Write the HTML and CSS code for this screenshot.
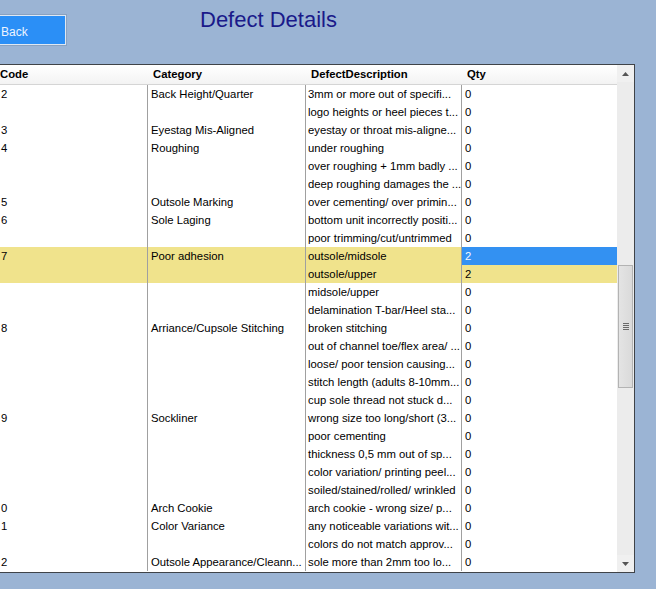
FILE: index.html
```html
<!DOCTYPE html>
<html>
<head>
<meta charset="utf-8">
<title>Defect Details</title>
<link rel="stylesheet" href="styles.css">
</head>
<body>
<div class="topbar">
  <button class="back-btn">Back</button>
  <h1 class="title">Defect Details</h1>
</div>
<div class="grid">
  <div class="table">
    <div class="row head">
      <div class="cell c-code">Code</div>
      <div class="cell c-cat">Category</div>
      <div class="cell c-desc">DefectDescription</div>
      <div class="cell c-qty">Qty</div>
    </div>
    <div class="body">
      <div class="row"><div class="cell c-code">2</div><div class="cell c-cat">Back Height/Quarter</div><div class="cell c-desc">3mm or more out of specifi...</div><div class="cell c-qty">0</div></div>
      <div class="row"><div class="cell c-code"></div><div class="cell c-cat"></div><div class="cell c-desc">logo heights or heel pieces t...</div><div class="cell c-qty">0</div></div>
      <div class="row"><div class="cell c-code">3</div><div class="cell c-cat">Eyestag Mis-Aligned</div><div class="cell c-desc">eyestay or throat mis-aligne...</div><div class="cell c-qty">0</div></div>
      <div class="row"><div class="cell c-code">4</div><div class="cell c-cat">Roughing</div><div class="cell c-desc">under roughing</div><div class="cell c-qty">0</div></div>
      <div class="row"><div class="cell c-code"></div><div class="cell c-cat"></div><div class="cell c-desc">over roughing + 1mm badly ...</div><div class="cell c-qty">0</div></div>
      <div class="row"><div class="cell c-code"></div><div class="cell c-cat"></div><div class="cell c-desc">deep roughing damages the ...</div><div class="cell c-qty">0</div></div>
      <div class="row"><div class="cell c-code">5</div><div class="cell c-cat">Outsole Marking</div><div class="cell c-desc">over cementing/ over primin...</div><div class="cell c-qty">0</div></div>
      <div class="row"><div class="cell c-code">6</div><div class="cell c-cat">Sole Laging</div><div class="cell c-desc">bottom unit incorrectly positi...</div><div class="cell c-qty">0</div></div>
      <div class="row"><div class="cell c-code"></div><div class="cell c-cat"></div><div class="cell c-desc">poor trimming/cut/untrimmed</div><div class="cell c-qty">0</div></div>
      <div class="row hl"><div class="cell c-code">7</div><div class="cell c-cat">Poor adhesion</div><div class="cell c-desc">outsole/midsole</div><div class="cell c-qty sel">2</div></div>
      <div class="row hl"><div class="cell c-code"></div><div class="cell c-cat"></div><div class="cell c-desc">outsole/upper</div><div class="cell c-qty">2</div></div>
      <div class="row"><div class="cell c-code"></div><div class="cell c-cat"></div><div class="cell c-desc">midsole/upper</div><div class="cell c-qty">0</div></div>
      <div class="row"><div class="cell c-code"></div><div class="cell c-cat"></div><div class="cell c-desc">delamination T-bar/Heel sta...</div><div class="cell c-qty">0</div></div>
      <div class="row"><div class="cell c-code">8</div><div class="cell c-cat">Arriance/Cupsole Stitching</div><div class="cell c-desc">broken stitching</div><div class="cell c-qty">0</div></div>
      <div class="row"><div class="cell c-code"></div><div class="cell c-cat"></div><div class="cell c-desc">out of channel toe/flex area/ ...</div><div class="cell c-qty">0</div></div>
      <div class="row"><div class="cell c-code"></div><div class="cell c-cat"></div><div class="cell c-desc">loose/ poor tension causing...</div><div class="cell c-qty">0</div></div>
      <div class="row"><div class="cell c-code"></div><div class="cell c-cat"></div><div class="cell c-desc">stitch length (adults 8-10mm...</div><div class="cell c-qty">0</div></div>
      <div class="row"><div class="cell c-code"></div><div class="cell c-cat"></div><div class="cell c-desc">cup sole thread not stuck d...</div><div class="cell c-qty">0</div></div>
      <div class="row"><div class="cell c-code">9</div><div class="cell c-cat">Sockliner</div><div class="cell c-desc">wrong size too long/short (3...</div><div class="cell c-qty">0</div></div>
      <div class="row"><div class="cell c-code"></div><div class="cell c-cat"></div><div class="cell c-desc">poor cementing</div><div class="cell c-qty">0</div></div>
      <div class="row"><div class="cell c-code"></div><div class="cell c-cat"></div><div class="cell c-desc">thickness 0,5 mm out of sp...</div><div class="cell c-qty">0</div></div>
      <div class="row"><div class="cell c-code"></div><div class="cell c-cat"></div><div class="cell c-desc">color variation/ printing peel...</div><div class="cell c-qty">0</div></div>
      <div class="row"><div class="cell c-code"></div><div class="cell c-cat"></div><div class="cell c-desc">soiled/stained/rolled/ wrinkled</div><div class="cell c-qty">0</div></div>
      <div class="row"><div class="cell c-code">0</div><div class="cell c-cat">Arch Cookie</div><div class="cell c-desc">arch cookie - wrong size/ p...</div><div class="cell c-qty">0</div></div>
      <div class="row"><div class="cell c-code">1</div><div class="cell c-cat">Color Variance</div><div class="cell c-desc">any noticeable variations wit...</div><div class="cell c-qty">0</div></div>
      <div class="row"><div class="cell c-code"></div><div class="cell c-cat"></div><div class="cell c-desc">colors do not match approv...</div><div class="cell c-qty">0</div></div>
      <div class="row"><div class="cell c-code">2</div><div class="cell c-cat">Outsole Appearance/Cleann...</div><div class="cell c-desc">sole more than 2mm too lo...</div><div class="cell c-qty">0</div></div>
    </div>
  </div>
  <div class="scrollbar">
    <div class="arrow up"><svg width="7" height="4" viewBox="0 0 7 4"><path d="M0 4 L3.5 0 L7 4 Z" fill="#555"/></svg></div>
    <div class="track">
      <div class="thumb">
        <div class="grip"><span></span><span></span><span></span><span></span></div>
      </div>
    </div>
    <div class="arrow down"><svg width="7" height="4" viewBox="0 0 7 4"><path d="M0 0 L3.5 4 L7 0 Z" fill="#555"/></svg></div>
  </div>
</div>
</body>
</html>
```

FILE: styles.css
```css
html, body {
  margin: 0;
  padding: 0;
}
body {
  background: #9bb4d4;
  width: 656px;
  height: 589px;
  overflow: hidden;
  font-family: "Liberation Sans", Arial, sans-serif;
}
.topbar {
  display: flex;
  align-items: flex-start;
  height: 64px;
}
.back-btn {
  margin: 15px 0 0 -10px;
  width: 76px;
  height: 30px;
  box-sizing: border-box;
  background: #2b8ff6;
  border: 1px solid #dfe8f3;
  box-shadow: 0 0 0 1px #8aa2c0;
  color: #eef4ff;
  font-family: "Liberation Sans", Arial, sans-serif;
  font-size: 12px;
  text-align: left;
  padding: 3px 0 0 10px;
}
.title {
  margin: 7px 0 0 134px;
  font-size: 22px;
  line-height: 25px;
  font-weight: normal;
  color: #1a1a8a;
}
.grid {
  display: flex;
  margin-left: -9px;
  width: 644px;
  height: 509px;
  box-sizing: border-box;
  border: 1px solid #3f4348;
  background: #fff;
  overflow: hidden;
}
.table {
  width: 625px;
  display: flex;
  flex-direction: column;
  overflow: hidden;
}
.row {
  display: grid;
  grid-template-columns: 156px 158px 156px 155px;
  height: 18px;
  font-size: 11.3px;
  line-height: 18px;
  color: #000;
}
.cell {
  box-sizing: border-box;
  white-space: nowrap;
  overflow: hidden;
  padding-left: 3px;
}
.body .c-code, .body .c-cat, .body .c-desc {
  border-right: 1px solid #a0a0a0;
}
.body .c-code { padding-left: 9px; }
.body .c-desc { padding-left: 2px; }
.head {
  height: 20px;
  line-height: 19px;
  font-weight: bold;
  background: linear-gradient(#ffffff, #f3f3f3);
  border-bottom: 1px solid #d5d5d5;
  box-sizing: border-box;
}
.head .cell { padding-left: 5px; }
.head .c-code { padding-left: 8px; }
.hl .cell { background: #f0e38c; }
.hl .cell.sel {
  background: #3391f2;
  color: #f4f8ff;
}
.scrollbar {
  width: 17px;
  display: flex;
  flex-direction: column;
  background: #ececec;
}
.arrow {
  height: 17px;
  display: flex;
  align-items: center;
  justify-content: center;
  background: #f0f0f0;
}
.track {
  flex: 1;
  padding-top: 183px;
}
.thumb {
  margin-left: 1px;
  width: 15px;
  height: 123px;
  box-sizing: border-box;
  border: 1px solid #b3b3b3;
  background: linear-gradient(to right, #e4e4e4, #dadada);
  display: flex;
  align-items: center;
  justify-content: center;
}
.grip {
  display: flex;
  flex-direction: column;
  gap: 1px;
}
.grip span {
  display: block;
  width: 6px;
  height: 1px;
  background: #6a6a6a;
}
```
